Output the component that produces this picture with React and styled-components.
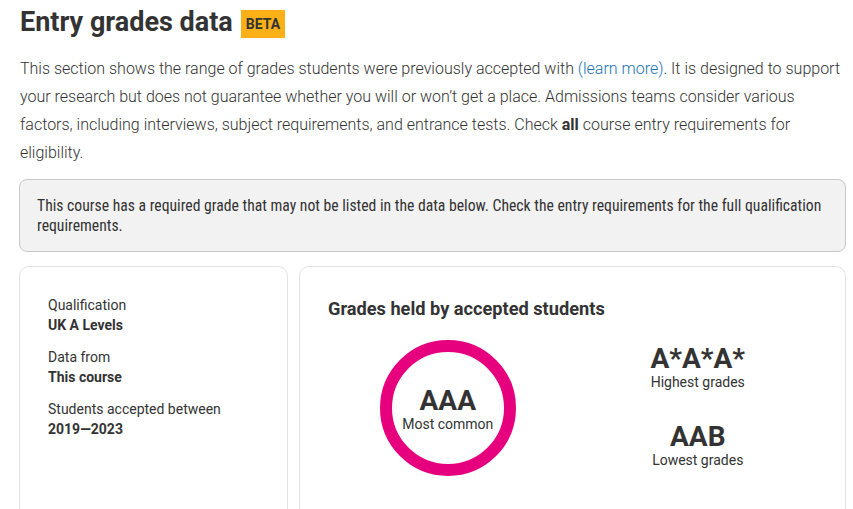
import styled, { createGlobalStyle } from 'styled-components';

const GlobalStyle = createGlobalStyle`
  body {
    margin: 0;
    background: #fff;
    font-family: Roboto, 'Liberation Sans', sans-serif;
    color: #333;
  }
`;

const Page = styled.div`
  width: 853px;
  box-sizing: border-box;
  padding: 4px 7px 0 19px;
`;

const TitleRow = styled.div`
  display: flex;
  align-items: center;
  gap: 8px;
  margin-left: 1px;
`;

const Title = styled.h1`
  margin: 0;
  font-size: 27px;
  font-weight: 700;
  line-height: 36px;
  color: #333;
`;

const Badge = styled.span`
  background: #fbb017;
  color: #333;
  font-size: 14px;
  font-weight: 700;
  padding: 6px 5px 5px;
  line-height: 17px;
  margin-top: 3px;
`;

const Intro = styled.p`
  margin: 15px 0 0 1px;
  font-size: 16px;
  font-weight: 300;
  line-height: 28px;
  color: #333;
`;

const Link = styled.a`
  color: #1a73b8;
  text-decoration: none;
`;

const Bold = styled.strong`
  font-weight: 700;
`;

const Notice = styled.div`
  margin-top: 12px;
  background: #f2f2f2;
  border: 1px solid #c8c8c8;
  border-radius: 8px;
  padding: 16px 18px 15px 17px;
  font-family: 'Liberation Sans Narrow', 'Roboto Condensed', 'Liberation Sans', sans-serif;
  font-size: 15.7px;
  line-height: 20px;
  color: #333;
`;

const Cards = styled.div`
  margin-top: 14px;
  display: grid;
  grid-template-columns: 269px 1fr;
  gap: 11px;
`;

const Card = styled.div`
  border: 1px solid #e3e3e3;
  border-radius: 10px;
  height: 260px;
  box-sizing: border-box;
  padding: ${p => p.$pad};
`;

const Facts = styled.dl`
  margin: 0;
  display: flex;
  flex-direction: column;
  gap: 12px;
`;

const Fact = styled.div`
  font-size: 14px;
  line-height: 20px;
`;

const FactLabel = styled.dt`
  color: #333;
`;

const FactValue = styled.dd`
  margin: 0;
  font-weight: 700;
  color: #333;
`;

const Heading = styled.h2`
  margin: 0;
  font-size: 18.2px;
  font-weight: 700;
  line-height: 24px;
  color: #333;
`;

const GradesGrid = styled.div`
  margin-top: 19px;
  display: grid;
  grid-template-columns: 1fr 1fr;
  align-items: center;
`;

const Ring = styled.div`
  justify-self: center;
  margin-left: -5px;
  width: 136px;
  height: 136px;
  box-sizing: border-box;
  border: 12px solid #e6007e;
  border-radius: 50%;
  display: flex;
  flex-direction: column;
  align-items: center;
  justify-content: center;
  padding-top: 2px;
`;

const Stats = styled.div`
  display: flex;
  flex-direction: column;
  align-items: center;
  gap: 31px;
  margin-top: -4px;
  margin-left: 6px;
`;

const Grade = styled.div`
  text-align: center;
`;

const GradeValue = styled.div`
  font-size: 28px;
  font-weight: 700;
  line-height: 30px;
  color: #333;
`;

const GradeLabel = styled.div`
  font-size: 14px;
  line-height: 17px;
  color: #333;
`;

const facts = [
  { label: 'Qualification', value: 'UK A Levels' },
  { label: 'Data from', value: 'This course' },
  { label: 'Students accepted between', value: '2019\u20142023' },
];

const App = () => {
  return (
    <Page>
      <GlobalStyle />
      <TitleRow>
        <Title>Entry grades data</Title>
        <Badge>BETA</Badge>
      </TitleRow>
      <Intro>
        This section shows the range of grades students were previously accepted with{' '}
        <Link href="#">(learn more)</Link>. It is designed to support your research but does
        not guarantee whether you will or won’t get a place. Admissions teams consider various
        factors, including interviews, subject requirements, and entrance tests. Check{' '}
        <Bold>all</Bold> course entry requirements for eligibility.
      </Intro>
      <Notice>
        This course has a required grade that may not be listed in the data below. Check the
        entry requirements for the full qualification requirements.
      </Notice>
      <Cards>
        <Card $pad="28px 20px 0 28px">
          <Facts>
            {facts.map(item => (
              <Fact key={item.label}>
                <FactLabel>{item.label}</FactLabel>
                <FactValue>{item.value}</FactValue>
              </Fact>
            ))}
          </Facts>
        </Card>
        <Card $pad="30px 28px 0 28px">
          <Heading>Grades held by accepted students</Heading>
          <GradesGrid>
            <Ring>
              <GradeValue>AAA</GradeValue>
              <GradeLabel>Most common</GradeLabel>
            </Ring>
            <Stats>
              <Grade>
                <GradeValue>A*A*A*</GradeValue>
                <GradeLabel>Highest grades</GradeLabel>
              </Grade>
              <Grade>
                <GradeValue>AAB</GradeValue>
                <GradeLabel>Lowest grades</GradeLabel>
              </Grade>
            </Stats>
          </GradesGrid>
        </Card>
      </Cards>
    </Page>
  );
};

export default App;
